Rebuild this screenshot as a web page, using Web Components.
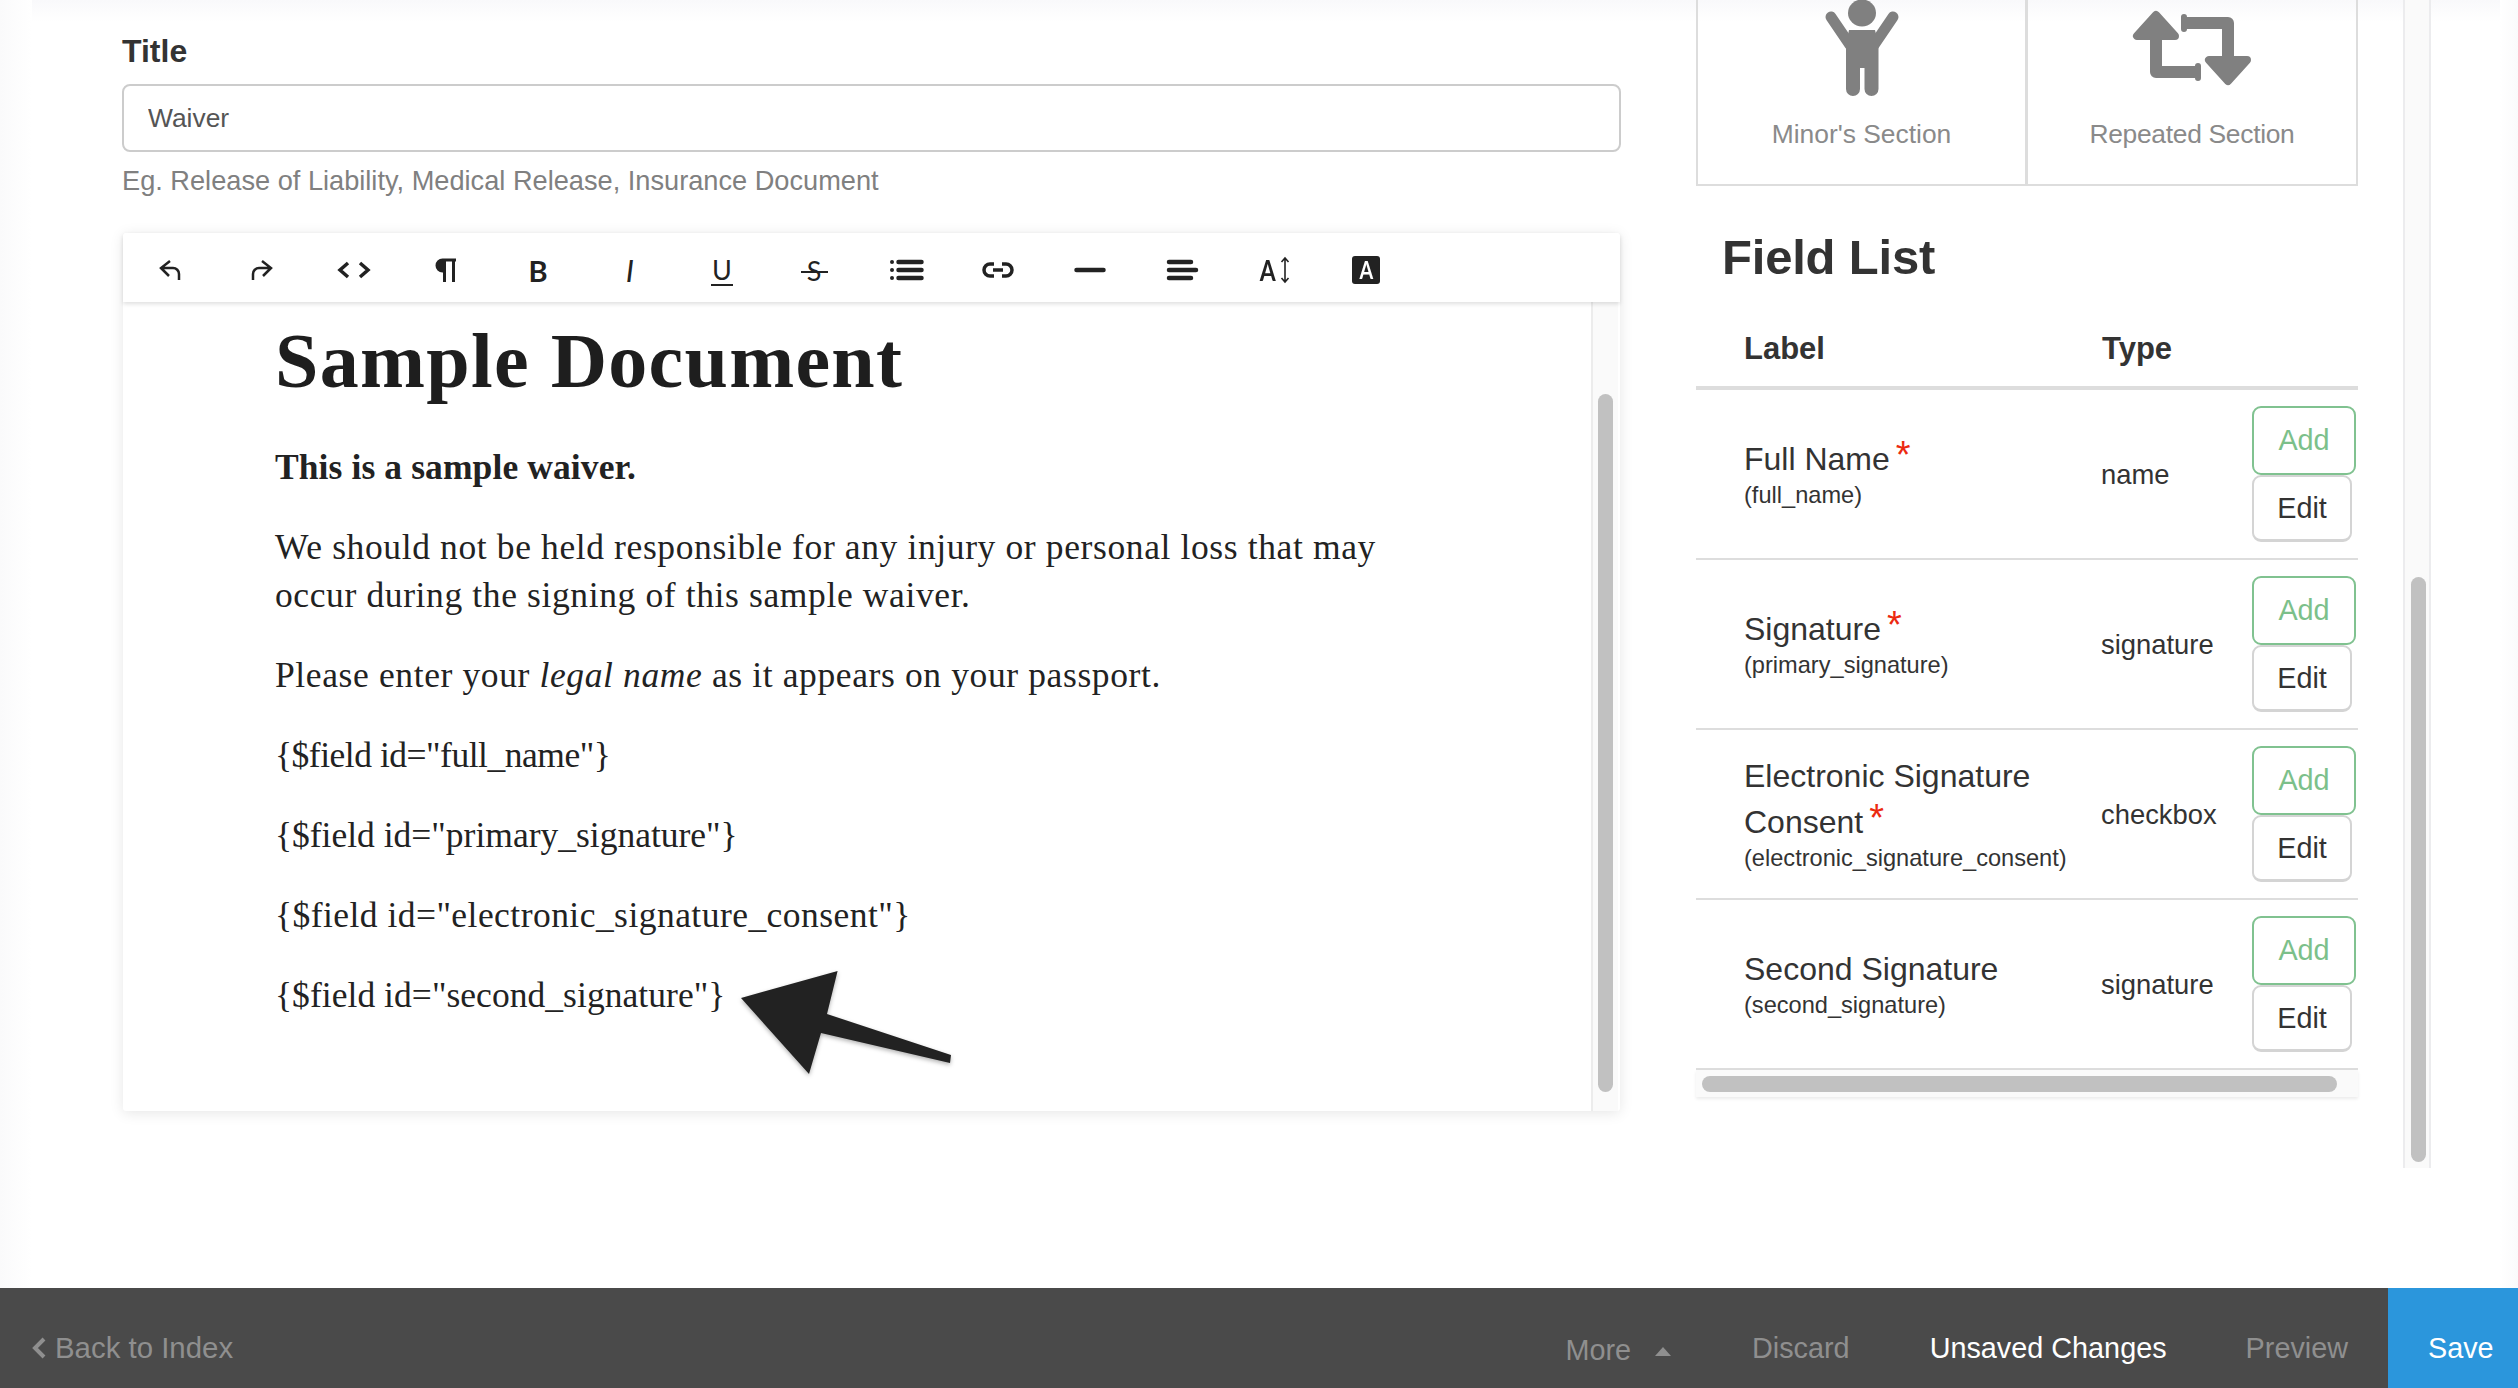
<!doctype html>
<html lang="en"><head><meta charset="utf-8"><title>Waiver editor</title>
<style>
html,body{margin:0;padding:0;background:#fff;overflow:hidden}
body{font-family:"Liberation Sans",Arial,sans-serif}
</style></head><body>
<app-page>
  <form-field slot="main" label="Title" value="Waiver" hint="Eg. Release of Liability, Medical Release, Insurance Document"></form-field>
  <doc-editor slot="main">
    <h1>Sample Document</h1>
    <p><b style="letter-spacing:.1px">This is a sample waiver.</b></p>
    <p>We should not be held responsible for any injury or personal loss that may occur during the signing of this sample waiver.</p>
    <p>Please enter your <i>legal name</i> as it appears on your passport.</p>
    <p style="letter-spacing:-.48px">{$field id="full_name"}</p>
    <p style="letter-spacing:0">{$field id="primary_signature"}</p>
    <p style="letter-spacing:.46px">{$field id="electronic_signature_consent"}</p>
    <p style="letter-spacing:.05px">{$field id="second_signature"}</p>
  </doc-editor>
  <section-cards slot="side"></section-cards>
  <field-list slot="side">
    <field-row required type="name"><span slot="label">Full Name</span><span slot="key">(full_name)</span></field-row>
    <field-row required type="signature"><span slot="label">Signature</span><span slot="key">(primary_signature)</span></field-row>
    <field-row required type="checkbox"><span slot="label">Electronic Signature Consent</span><span slot="key">(electronic_signature_consent)</span></field-row>
    <field-row type="signature"><span slot="label">Second Signature</span><span slot="key">(second_signature)</span></field-row>
  </field-list>
  <bottom-bar slot="bar"></bottom-bar>
</app-page>
<script>
function def(name, css, html){
  customElements.define(name, class extends HTMLElement{
    connectedCallback(){
      if(this.shadowRoot) return;
      const r=this.attachShadow({mode:'open'});
      r.innerHTML='<style>'+css+'</style>'+(typeof html==='function'?html(this):html);
    }
  });
}
def('app-page',`
  :host{display:flex;flex-direction:column;height:1388px;width:2518px;font-family:"Liberation Sans",Arial,sans-serif;color:#333}
  main{height:1288px;box-sizing:border-box;padding-left:122px;display:flex;overflow:hidden;
    background:linear-gradient(#f9f9fb,#fff 22px),#fff;position:relative}
  main::before,main::after{content:"";position:absolute;top:0;bottom:0;width:32px;pointer-events:none}
  main::before{left:0;background:linear-gradient(to right,#fafafb,#fff)}
  main::after{right:0;width:18px;background:linear-gradient(to left,#fafafb,#fff)}
  .col{width:1499px;padding-top:33px;box-sizing:border-box}
  .side{width:662px;margin-left:75px}
  .rail{margin-left:45px;width:28px;height:1168px;box-sizing:border-box;border:solid #ececee;border-width:0 2px;background:#fafafa;padding:577px 0 0 6px}
  .rail i{display:block;width:15px;height:585px;border-radius:8px;background:#c1c1c1}
`,`<main><div class="col"><slot name="main"></slot></div><div class="side"><slot name="side"></slot></div><div class="rail"><i></i></div></main><slot name="bar"></slot>`);

def('form-field',`
  :host{display:block}
  label{display:block;font:bold 32px/36px "Liberation Sans",Arial,sans-serif;color:#333;margin-bottom:15px}
  input{display:block;width:100%;height:68px;box-sizing:border-box;border:2.5px solid #ccc;border-radius:8px;padding:0 24px;
    font:26.4px "Liberation Sans",Arial,sans-serif;color:#555;background:#fff;outline:none}
  p{margin:11px 0 34px;font:27.2px/36px "Liberation Sans",Arial,sans-serif;color:#808080}
`,h=>`<label>${h.getAttribute('label')}</label><input value="${h.getAttribute('value')}"><p>${h.getAttribute('hint')}</p>`);

const NARROW='display:inline-block;transform:scaleX(.82)';
const ICONS=[
 `<svg viewBox="0 0 40 40"><path d="M20 11 11 18l8 8M11 18h12a6 6 0 0 1 6 6v6" fill="none" stroke="#222" stroke-width="2.5"/></svg>`,
 `<svg viewBox="0 0 40 40"><path transform="matrix(-1 0 0 1 40 0)" d="M20 11 11 18l8 8M11 18h12a6 6 0 0 1 6 6v6" fill="none" stroke="#222" stroke-width="2.5"/></svg>`,
 `<svg viewBox="0 0 40 40"><path d="M14 13 6 20l8 7M26 13l8 7-8 7" fill="none" stroke="#222" stroke-width="3.5"/></svg>`,
 `<svg viewBox="0 0 40 40"><path d="M30 8.5H16.5a7 7 0 0 0 0 14H17V32h3V11.500h6V32h3V11.500h1z" fill="#222"/></svg>`,
 `<b style="font:bold 29px Lato,sans-serif">B</b>`,
 `<i style="font:italic 400 31px Lato,sans-serif">I</i>`,
 `<span style="font:400 27px/1 Lato,sans-serif;border-bottom:2px solid #222;padding:0 1px 1px;position:relative;top:1px">U</span>`,
 `<span style="font:400 27px/1 Lato,sans-serif;position:relative">S<u style="position:absolute;left:-6px;right:-7px;top:14px;height:2px;background:#222"></u></span>`,
 `<svg viewBox="0 0 40 40"><path d="M12.500 12h23M12.500 20h23M12.500 28h23" stroke="#222" stroke-width="4.500" stroke-linecap="round"/><path d="M6 12h.01M6 20h.01M6 28h.01" stroke="#222" stroke-width="4" stroke-linecap="round"/></svg>`,
 `<svg viewBox="0 0 40 40"><path d="M16 14h-4a6 6 0 0 0 0 12h4M24 14h4a6 6 0 0 1 0 12h-4M15 20h10" fill="none" stroke="#222" stroke-width="3.500"/></svg>`,
 `<svg viewBox="0 0 40 40"><path d="M6.500 20h27" stroke="#222" stroke-width="4.500" stroke-linecap="round"/></svg>`,
 `<svg viewBox="0 0 40 40"><path d="M7 12h22M7 20h27M7 28h22" stroke="#222" stroke-width="4.500" stroke-linecap="round"/></svg>`,
 `<span style="display:inline-flex;align-items:center;gap:2px;font:bold 28px/1 Lato,sans-serif"><span style="${NARROW}">A</span><svg width="10" height="28" viewBox="0 0 10 28"><path d="M5 2v24M1.500 6 5 2l3.500 4M1.500 22 5 26l3.500-4" fill="none" stroke="#222" stroke-width="1.600"/></svg></span>`,
 `<span style="display:inline-flex;width:28px;height:28px;border-radius:3px;background:#222;color:#fff;align-items:center;justify-content:center;font:bold 24px/1 Lato,sans-serif"><span style="${NARROW}">A</span></span>`
];
def('doc-editor',`
  :host{display:block;position:relative;width:1497px;height:878px;margin-left:1px;background:#fff;box-shadow:0 2px 14px rgba(0,0,0,.1);border-radius:3px}
  .tb{display:flex;height:69px;box-sizing:border-box;padding:5px 0 0 1px;background:#fff;box-shadow:0 2px 4px rgba(0,0,0,.13);position:relative;z-index:1;border-radius:3px 3px 0 0}
  .tb span.b{width:92px;display:flex;align-items:center;justify-content:center;color:#222}
  .tb svg{display:block}
  .tb span.b>svg{width:40px;height:40px}
  .body{display:flex;height:809px}
  .doc{flex:1;min-width:0;box-sizing:border-box;padding:9px 0 0 152px;font:35.500px/48px "Liberation Serif","Times New Roman",serif;color:#222;letter-spacing:.62px}
  ::slotted(h1){font:bold 78px/100px "Liberation Serif","Times New Roman",serif;margin:0 0 32px;letter-spacing:1.3px;color:#1e1e1e}
  ::slotted(p){margin:0 0 32px;width:1130px}
  .track{width:27px;margin-right:2px;box-sizing:border-box;border-left:2px solid #ececec;background:#fafafa;padding:92px 0 0 5px}
  .track i{display:block;width:15px;height:698px;border-radius:8px;background:#c1c1c1}
  svg.arrow{position:absolute;left:617px;top:737px;filter:drop-shadow(0 2px 2px rgba(0,0,0,.3))}
`,`<div class="tb">${ICONS.map(i=>`<span class="b">${i}</span>`).join('')}</div>
   <div class="body"><div class="doc"><slot></slot></div><div class="track"><i></i></div></div>
   <svg class="arrow" width="220" height="110" viewBox="0 0 220 110"><path d="M1 28 97.600 1 87 44 211 85 210 93 81 63 69 104Z" fill="#222"/></svg>`);

def('section-cards',`
  :host{display:grid;grid-template-columns:331px 331px;height:186px}
  div{border:solid #ddd;border-width:0 2.500px 2.500px;display:flex;flex-direction:column;align-items:center;box-sizing:border-box;height:186px;color:#8a8a8a;font-size:26.4px;position:relative}
  div+div{margin-left:-1px}
  svg{display:block}
  .t{height:36px;line-height:36px;white-space:nowrap}
`,`<div><svg width="80" height="116" viewBox="0 0 80 116"><ellipse cx="40" cy="13" rx="14" ry="13.500" fill="#808080"/><path d="M9 17 28 45M71 17 52 45" stroke="#808080" stroke-width="11" stroke-linecap="round"/><path d="M27 30H53L56.500 44V89a7 7 0 0 1-14 0V68H38V89a7 7 0 0 1-14 0V44Z" fill="#808080"/></svg><span class="t">Minor's Section</span></div>
  <div><svg width="126" height="116" viewBox="0 0 126 116" style="margin-left:2px"><path d="M26 34V72H68M54 23H98V62" fill="none" stroke="#808080" stroke-width="12" stroke-linejoin="round"/><path d="M26 15 7 36H45ZM98 81 79 60H117Z" fill="#808080" stroke="#808080" stroke-width="8" stroke-linejoin="round"/><path d="M54 17v12M68 66v12" stroke="#808080" stroke-width="6" stroke-linecap="round"/></svg><span class="t" style="letter-spacing:-.3px">Repeated Section</span></div>`);

def('field-list',`
  :host{display:block}
  h2{margin:41px 0 0;padding-left:26px;font:bold 49px/60px "Liberation Sans",Arial,sans-serif;color:#333;letter-spacing:-.2px}
  .head{display:grid;grid-template-columns:406px 256px;height:103px;box-sizing:border-box;padding-top:44px;border-bottom:4px solid #ddd;font:bold 31px/36px "Liberation Sans",Arial,sans-serif;color:#333}
  .head span:first-child{padding-left:48px}
  .sb{height:27px;box-sizing:border-box;padding:6px 0 0 6px;background:#fafafa;box-shadow:0 2px 3px rgba(0,0,0,.08)}
  .sb i{display:block;width:635px;height:16px;border-radius:8px;background:#c1c1c1}
`,`<h2>Field List</h2><div class="head"><span>Label</span><span>Type</span></div><slot></slot><div class="sb"><i></i></div>`);

def('field-row',`
  :host{display:grid;grid-template-columns:406px 150px 106px;align-items:center;height:170px;box-sizing:border-box;border-bottom:2px solid #ddd}
  .l{padding:0 0 3px 48px;box-sizing:border-box}
  .n{font-size:32px;line-height:46px;color:#333}
  .k{font-size:23.600px;line-height:30px;color:#333;white-space:nowrap;margin-top:-2px}
  .req{color:#ec2a10;font-size:38px;line-height:0;margin-left:6px;vertical-align:2px}
  :host(:not([required])) .req{display:none}
  .t{font-size:27.400px;color:#333;padding-top:2px;margin-left:-1px}
  .b{display:flex;flex-direction:column;align-items:flex-start}
  .a,.e{box-sizing:border-box;display:flex;align-items:center;justify-content:center;font-size:28.8px;background:#fff}
  .a{width:104px;height:69px;border:2.500px solid #80c290;border-radius:9px;color:#7cc08a}
  .e{width:100px;height:67px;border:2px solid #d4d4d4;border-bottom-width:3px;border-radius:9px;color:#333}
`,h=>`<div class="l"><div class="n"><slot name="label"></slot><span class="req">*</span></div><div class="k"><slot name="key"></slot></div></div>
<div class="t">${h.getAttribute('type')}</div><div class="b"><span class="a">Add</span><span class="e">Edit</span></div>`);

def('bottom-bar',`
  :host{display:flex;align-items:center;height:100px;background:#4a4a4a;color:#8f8f8f;font:28.8px/36px "Liberation Sans",Arial,sans-serif;padding-left:32px}
  .back{display:flex;align-items:center;gap:9px;margin-top:20px;font-size:29.400px}
  .r{margin-left:auto;display:flex;align-items:center;height:100%}
  .more{display:flex;align-items:center;margin-top:24px;margin-right:81px}
  .more svg{margin-left:24px;margin-top:2px}
  .d{margin-right:80px;margin-top:20px}.u{margin-right:79px;color:#fff;margin-top:20px}.p{margin-right:40px;margin-top:20px}
  .s{width:130px;height:100%;box-sizing:border-box;padding:20px 0 0 40px;background:#2b96dc;color:#fff;display:flex;align-items:center}
`,`<span class="back"><svg width="14" height="22" viewBox="0 0 14 22"><path d="M12 2 3 11l9 9" fill="none" stroke="#8f8f8f" stroke-width="4"/></svg><span>Back to Index</span></span>
<span class="r"><span class="more">More<svg width="16" height="9" viewBox="0 0 16 9"><path d="M8 0 16 9H0Z" fill="#8f8f8f"/></svg></span><span class="d">Discard</span><span class="u">Unsaved Changes</span><span class="p">Preview</span><span class="s">Save</span></span>`);
</script>
</body></html>
